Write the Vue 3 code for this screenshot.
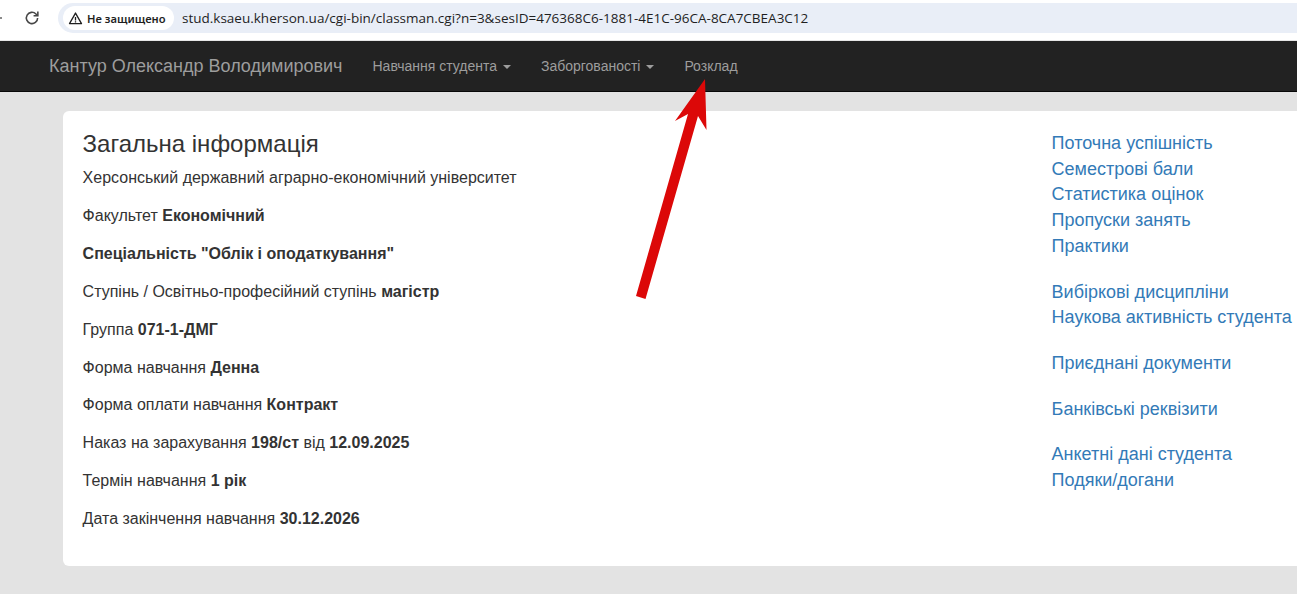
<script setup>
const info = [
  [['', 'Факультет '], ['b', 'Економічний']],
  [['b', 'Спеціальність "Облік і оподаткування"']],
  [['', 'Ступінь / Освітньо-професійний ступінь '], ['b', 'магістр']],
  [['', 'Группа '], ['b', '071-1-ДМГ']],
  [['', 'Форма навчання '], ['b', 'Денна']],
  [['', 'Форма оплати навчання '], ['b', 'Контракт']],
  [['', 'Наказ на зарахування '], ['b', '198/ст'], ['', ' від '], ['b', '12.09.2025']],
  [['', 'Термін навчання '], ['b', '1 рік']],
  [['', 'Дата закінчення навчання '], ['b', '30.12.2026']],
]
const groups = [
  ['Поточна успішність', 'Семестрові бали', 'Статистика оцінок', 'Пропуски занять', 'Практики'],
  ['Вибіркові дисципліни', 'Наукова активність студента'],
  ['Приєднані документи'],
  ['Банківські реквізити'],
  ['Анкетні дані студента', 'Подяки/догани'],
]
</script>

<template>
  <div class="page">
    <header class="chrome">
      <i class="back"></i>
      <svg class="reload" viewBox="0 0 16 16" width="18" height="18" fill="none" stroke="#474747" stroke-width="1.4">
        <path d="M13 8a5 5 0 1 1-1.5-3.6L13 6" />
        <path d="M13.2 2.2V6H9.4" fill="none" />
      </svg>
      <div class="omnibox">
        <div class="chip">
          <svg viewBox="0 0 16 16" width="15" height="15" fill="none" stroke="#1f1f1f" stroke-width="1.4">
            <path d="M8 2.2 14.4 13.4H1.6Z" stroke-linejoin="round" />
            <path d="M8 6.4v3.6M8 11v1.2" />
          </svg>
          <span>Не защищено</span>
        </div>
        <span class="url">stud.ksaeu.kherson.ua/cgi-bin/classman.cgi?n=3&amp;sesID=476368C6-1881-4E1C-96CA-8CA7CBEA3C12</span>
      </div>
    </header>

    <nav class="navbar">
      <a class="brand">Кантур Олександр Володимирович</a>
      <a class="item">Навчання студента <i class="caret"></i></a>
      <a class="item">Заборгованості <i class="caret"></i></a>
      <a class="item">Розклад</a>
    </nav>

    <main class="main">
      <section class="card">
        <div class="left">
          <h3>Загальна інформація</h3>
          <p>Херсонський державний аграрно-економічний університет</p>
          <p v-for="(row, i) in info" :key="i">
            <template v-for="(part, j) in row" :key="j">
              <b v-if="part[0]">{{ part[1] }}</b>
              <template v-else>{{ part[1] }}</template>
            </template>
          </p>
        </div>
        <aside class="right">
          <div v-for="(g, i) in groups" :key="i" class="group">
            <a v-for="l in g" :key="l">{{ l }}</a>
          </div>
        </aside>
      </section>
    </main>

    <svg class="arrow" width="1297" height="594" viewBox="0 0 1297 594">
      <polygon points="705,79 706.5,130 698,116 645.5,299 636,296 688,114 675,121" fill="#dc0808" />
    </svg>
  </div>
</template>

<style>
html, body { margin: 0; overflow: hidden; background: #e3e3e3; }
</style>

<style scoped>
.page {
  position: relative;
  width: 1297px;
  height: 594px;
  overflow: hidden;
  background: #e3e3e3;
  font-family: "Liberation Sans", Arial, sans-serif;
  color: #333;
}
.chrome {
  height: 41px;
  box-sizing: border-box;
  padding: 3px 0 7px 0;
  display: flex;
  align-items: center;
  background: #fff;
  border-bottom: 1px solid #e6e6e6;
}
.back {
  flex: none;
  width: 2px;
  height: 2px;
  margin-right: 21px;
  background: #8a8a8a;
}
.reload { flex: none; margin-right: 17px; }
.omnibox {
  flex: 1;
  height: 30px;
  display: flex;
  align-items: center;
  box-sizing: border-box;
  padding-left: 5px;
  background: #e9eef7;
  border-radius: 15px 0 0 15px;
}
.chip {
  display: flex;
  align-items: center;
  gap: 4px;
  height: 24px;
  box-sizing: border-box;
  width: 111px;
  padding: 0 0 0 5px;
  background: #fff;
  border-radius: 12px;
  font: 600 11.2px "Noto Sans", "Open Sans", sans-serif;
  color: #1f1f1f;
}
.url {
  margin-left: 8px;
  font: 13.5px "Open Sans", "Noto Sans", sans-serif;
  color: #1f1f1f;
  white-space: nowrap;
}
.navbar {
  height: 51px;
  box-sizing: border-box;
  display: flex;
  align-items: center;
  padding-left: 49px;
  background: #222;
  border-bottom: 1px solid #080808;
  color: #9d9d9d;
}
.brand { font-size: 18px; margin-right: 30px; }
.item { font-size: 14px; margin-right: 30px; white-space: nowrap; }
.caret {
  display: inline-block;
  width: 0;
  height: 0;
  margin-left: 2px;
  vertical-align: middle;
  border-top: 4px solid #9d9d9d;
  border-left: 4px solid transparent;
  border-right: 4px solid transparent;
}
.main { padding: 19px 0 0 63px; }
.card {
  width: 1260px;
  height: 455px;
  box-sizing: border-box;
  padding: 20px 0 0 19.6px;
  display: flex;
  background: #fff;
  border-radius: 6px;
}
.left { width: 969px; flex: none; font-size: 16px; }
h3 {
  margin: 0 0 10px;
  font-size: 24px;
  font-weight: 400;
  line-height: 26.4px;
}
p { margin: 0 0 14.98px; line-height: 22.86px; }
b { font-weight: 700; }
.right {
  display: flex;
  flex-direction: column;
  gap: 20px;
}
.group { display: flex; flex-direction: column; }
.group a {
  font-size: 18px;
  line-height: 25.7px;
  color: #337ab7;
  white-space: nowrap;
}
.arrow { position: absolute; left: 0; top: 0; pointer-events: none; }
</style>
